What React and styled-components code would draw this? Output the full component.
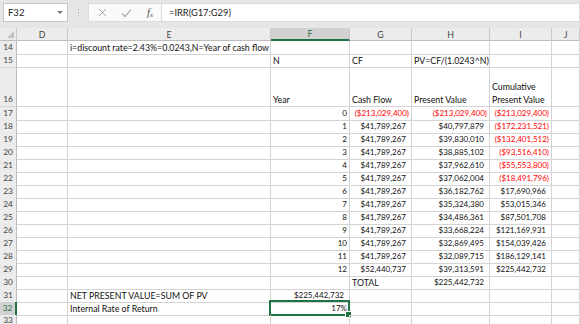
import React from "react";
import styled, { createGlobalStyle } from "styled-components";

const GREEN = "#217346";
const GRID = "#d4d4d4";
const COLS = "17px 51px 203px 79px 62px 78px 62px 1fr";

const GlobalStyle = createGlobalStyle`
  html, body { margin: 0; padding: 0; background: #fff; }
  body { font-family: Lato, "Liberation Sans", sans-serif; overflow: hidden; }
  * { box-sizing: border-box; }
`;

const S = {
  Window: styled.div`
    width: 580px;
    height: 324px;
    overflow: hidden;
    background: #fff;
  `,
  Toolbar: styled.div`
    height: 28px;
    background: #e6e6e6;
    display: flex;
    align-items: flex-start;
    padding: 3px 0 0 3px;
  `,
  NameBox: styled.div`
    width: 65px;
    height: 19px;
    background: #fff;
    border: 1px solid #c6c6c6;
    display: flex;
    align-items: center;
    justify-content: space-between;
    padding: 0 4px 0 4px;
    font-size: 9.5px;
    color: #222;
  `,
  Caret: styled.span`
    width: 0;
    height: 0;
    border-left: 3px solid transparent;
    border-right: 3px solid transparent;
    border-top: 3px solid #777;
  `,
  Grip: styled.div`
    width: 20px;
    height: 19px;
    display: flex;
    flex-direction: column;
    align-items: center;
    justify-content: center;
    gap: 2px;
    span {
      width: 1px;
      height: 1px;
      background: #aaa;
    }
  `,
  FxButtons: styled.div`
    width: 73px;
    height: 19px;
    background: #fafafa;
    border: 1px solid #dcdcdc;
    border-right: none;
    display: flex;
    align-items: center;
    padding-left: 9px;
    gap: 14px;
    color: #a0a0a0;
  `,
  Fx: styled.span`
    font-family: "Liberation Serif", serif;
    font-style: italic;
    font-size: 10.5px;
    color: #555;
    margin-left: 1px;
    sub { font-size: 7px; vertical-align: -1px; }
  `,
  Formula: styled.div`
    flex: 1;
    height: 19px;
    background: #fff;
    border: 1px solid #dcdcdc;
    display: flex;
    align-items: center;
    padding-left: 7px;
    font-size: 9.3px;
    color: #222;
  `,
  Row: styled.div`
    display: grid;
    grid-template-columns: ${COLS};
    height: ${(p) => p.$h}px;
  `,
  ColHead: styled.div`
    background: ${(p) => (p.$sel ? "#d2d2d2" : "#ececec")};
    color: ${(p) => (p.$sel ? GREEN : "#444")};
    border-right: 1px solid #c8c8c8;
    border-bottom: ${(p) => (p.$sel ? `2px solid ${GREEN}` : "1px solid #bdbdbd")};
    font-size: 8.8px;
    display: flex;
    align-items: center;
    justify-content: center;
  `,
  Corner: styled.div`
    background: #ececec;
    border-right: 1px solid #c8c8c8;
    border-bottom: 1px solid #bdbdbd;
    position: relative;
    &::after {
      content: "";
      position: absolute;
      right: 2px;
      bottom: 2px;
      width: 0;
      height: 0;
      border-left: 7px solid transparent;
      border-bottom: 7px solid #c0c0c0;
    }
  `,
  RowHead: styled.div`
    background: ${(p) => (p.$sel ? "#d2d2d2" : "#ececec")};
    color: ${(p) => (p.$sel ? GREEN : "#444")};
    border-right: ${(p) => (p.$sel ? `2px solid ${GREEN}` : "1px solid #bdbdbd")};
    border-bottom: 1px solid #d8d8d8;
    font-size: 8.3px;
    display: flex;
    align-items: flex-end;
    justify-content: center;
    padding-bottom: 1px;
    line-height: 11px;
  `,
  Cell: styled.div`
    border-right: 1px solid ${GRID};
    border-bottom: 1px solid ${GRID};
    font-size: ${(p) => (p.$right ? 8 : 8.8)}px;
    line-height: 13px;
    color: ${(p) => (p.$red ? "#ff0000" : "#111")};
    display: flex;
    flex-direction: column;
    justify-content: flex-end;
    align-items: ${(p) => (p.$right ? "flex-end" : "flex-start")};
    padding: 0 ${(p) => p.$pr}px 0 2px;
    white-space: nowrap;
    position: relative;
  `,
  Selection: styled.div`
    position: absolute;
    left: -2px;
    top: -2px;
    right: -1px;
    bottom: -1px;
    border: 2px solid ${GREEN};
    pointer-events: none;
    &::after {
      content: "";
      position: absolute;
      right: -4px;
      bottom: -4px;
      width: 5px;
      height: 5px;
      background: ${GREEN};
      border: 1px solid #fff;
    }
  `,
};

const money = (v) => {
  const s = "$" + Math.abs(v).toLocaleString("en-US");
  return v < 0 ? { t: `(${s})`, red: true, r: true, pr: 2 } : { t: s, r: true, pr: 5 };
};
const num = (v) => ({ t: String(v), r: true, pr: 2 });
const txt = (t) => ({ t });

const flows = [
  [0, -213029400, -213029400, -213029400],
  [1, 41789267, 40797879, -172231521],
  [2, 41789267, 39830010, -132401512],
  [3, 41789267, 38885102, -93516410],
  [4, 41789267, 37962610, -55553800],
  [5, 41789267, 37062004, -18491796],
  [6, 41789267, 36182762, 17690966],
  [7, 41789267, 35324380, 53015346],
  [8, 41789267, 34486361, 87501708],
  [9, 41789267, 33668224, 121169931],
  [10, 41789267, 32869495, 154039426],
  [11, 41789267, 32089715, 186129141],
  [12, 52440737, 39313591, 225442732],
];

const rows = [
  { n: 14, h: 13, c: { E: txt("i=discount rate=2.43%=0.0243,N=Year of cash flow") } },
  { n: 15, h: 14, c: { F: txt("N"), G: txt("CF"), H: txt("PV=CF/(1.0243^N)") } },
  {
    n: 16,
    h: 39,
    c: { F: txt("Year"), G: txt("Cash Flow"), H: txt("Present Value"), I: { t: ["Cumulative", "Present Value"] } },
  },
  ...flows.map(([y, cf, pv, cum], i) => ({
    n: 17 + i,
    h: 13,
    c: { F: num(y), G: money(cf), H: money(pv), I: money(cum) },
  })),
  { n: 30, h: 13, c: { G: txt("TOTAL"), H: money(225442732) } },
  { n: 31, h: 13, c: { E: txt("NET PRESENT VALUE=SUM OF PV"), F: money(225442732) } },
  { n: 32, h: 13, sel: true, c: { E: txt("Internal Rate of Return"), F: { t: "17%", r: true, pr: 2, sel: true } } },
  { n: 33, h: 13, c: {} },
];

const LETTERS = ["D", "E", "F", "G", "H", "I", "J"];

const CheckIcon = () => (
  <svg width="11" height="10" viewBox="0 0 11 10" fill="none" stroke="#a6a6a6" strokeWidth="1.1">
    <path d="M1 5.5l3.2 3.2L10 1.5" />
  </svg>
);

const CrossIcon = () => (
  <svg width="9" height="9" viewBox="0 0 9 9" fill="none" stroke="#a6a6a6" strokeWidth="1">
    <path d="M1 1l7 7M8 1L1 8" />
  </svg>
);

const App = () => {
  return (
    <S.Window>
      <GlobalStyle />
      <S.Toolbar>
        <S.NameBox>
          F32
          <S.Caret />
        </S.NameBox>
        <S.Grip>
          <span />
          <span />
          <span />
        </S.Grip>
        <S.FxButtons>
          <CrossIcon />
          <CheckIcon />
          <S.Fx>
            f<sub>x</sub>
          </S.Fx>
        </S.FxButtons>
        <S.Formula>=IRR(G17:G29)</S.Formula>
      </S.Toolbar>

      <S.Row $h={13}>
        <S.Corner />
        {LETTERS.map((l) => (
          <S.ColHead key={l} $sel={l === "F"}>
            {l}
          </S.ColHead>
        ))}
      </S.Row>

      {rows.map((row) => (
        <S.Row key={row.n} $h={row.h}>
          <S.RowHead $sel={row.sel}>{row.n}</S.RowHead>
          {LETTERS.map((l) => {
            const cell = row.c[l];
            return (
              <S.Cell key={l} $right={cell?.r} $red={cell?.red} $pr={cell?.pr ?? 2}>
                {cell && (Array.isArray(cell.t) ? cell.t.map((line) => <span key={line}>{line}</span>) : cell.t)}
                {cell?.sel && <S.Selection />}
              </S.Cell>
            );
          })}
        </S.Row>
      ))}
    </S.Window>
  );
};

export default App;
